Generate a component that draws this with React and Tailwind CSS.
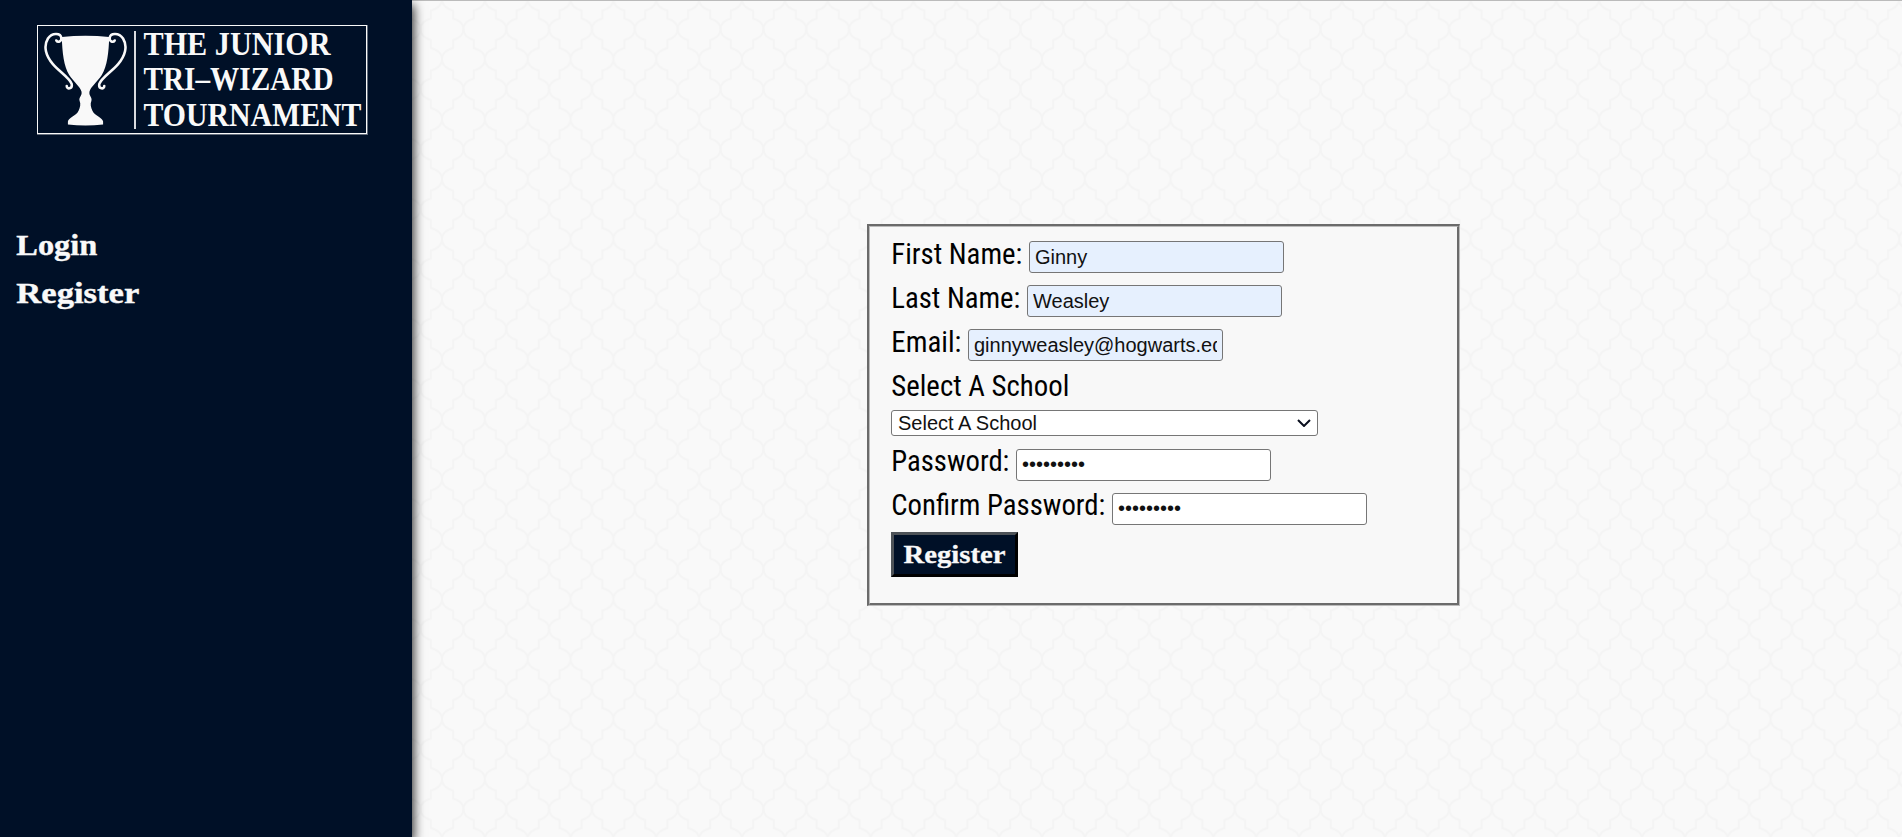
import React from "react";

function QuatrefoilBackground() {
  return (
    <svg className="absolute inset-0 h-full w-full" aria-hidden="true">
      <defs>
        <pattern id="quatrefoil" x="30" y="-1.7" width="42.857" height="60" patternUnits="userSpaceOnUse">
          <g fill="none" stroke="#f4f4f4" strokeWidth="2">
            <path d="M0 0C0 5.500 5 9.500 11.200 11.200V19.300C17 21 21.430 24.500 21.430 30C21.430 35.500 17 39 11.200 40.700V48.800C5 50.500 0 54.500 0 60" />
            <path d="M42.857 0C42.857 5.500 37.857 9.500 31.657 11.200V19.300C25.857 21 21.430 24.500 21.430 30C21.430 35.500 25.857 39 31.657 40.700V48.800C37.857 50.500 42.857 54.500 42.857 60" />
          </g>
        </pattern>
      </defs>
      <rect width="100%" height="100%" fill="url(#quatrefoil)" />
    </svg>
  );
}

function Trophy() {
  return (
    <svg className="mt-[6px] h-[96px] w-[83px] shrink-0" viewBox="0 0 84 96" aria-hidden="true">
      <g fill="#f9f9f9">
        <path d="M18 4.500Q42 2 66 4.500C65.500 20 64 34 58.500 43C54 50 47 55 46 60C45.300 64 49 66 48 69C46.500 72 47.500 76 49 79C51 84 59.500 86 59.800 90V93Q42 95 24.200 93V90C24.500 86 33 84 35 79C36.500 76 37.500 72 36 69C35 66 38.700 64 38 60C37 55 30 50 25.500 43C20 34 18.500 20 18 4.500Z" />
        <g fill="none" stroke="#f9f9f9" strokeWidth="2.600" strokeLinecap="round">
          <path d="M12.500 8C14 10.500 18 9 17.500 5.500C17 0 8 0 4 6C-1 14 2 24 9 32C16 40 26 46 28 52C29 57 23 58 23 54" />
          <path d="M71.500 8C70 10.500 66 9 66.500 5.500C67 0 76 0 80 6C85 14 82 24 75 32C68 40 58 46 56 52C55 57 61 58 61 54" />
        </g>
      </g>
    </svg>
  );
}

function Logo() {
  return (
    <div className="flex h-[109px] w-[330px] items-start border border-[#f9f9f9] pl-[6px] shadow-[0.5px_0.5px_0_0.5px_#f9f9f966]">
      <Trophy />
      <div className="ml-[7px] mt-[5px] h-[98px] w-[1.5px] shrink-0 bg-[#d9dbdf]" />
      <svg className="ml-[4px] h-[107px] w-[226px] shrink-0 overflow-visible">
        <g fill="#f9f9f9" fontFamily="'Liberation Serif', serif" fontWeight="700" fontSize="33">
          <text x="3.500" y="29.300" textLength="187" lengthAdjust="spacingAndGlyphs">THE JUNIOR</text>
          <text x="3.500" y="64.300" textLength="190" lengthAdjust="spacingAndGlyphs">TRI–WIZARD</text>
          <text x="3.500" y="99.500" textLength="218" lengthAdjust="spacingAndGlyphs">TOURNAMENT</text>
        </g>
      </svg>
    </div>
  );
}

function FieldRow({ label, width, value, type = "text", filled = false }) {
  const isPassword = type === "password";
  return (
    <div className="flex h-[44px] items-start">
      <svg className={`${width} h-[36px] shrink-0 overflow-visible`}>
        <text x="0.300" y={isPassword ? 28 : 29} fontFamily="'Roboto Condensed', Roboto, sans-serif" fontSize="29.500" textLength={label.length} lengthAdjust="spacingAndGlyphs">{label.text}</text>
      </svg>
      <input
        type={type}
        defaultValue={value}
        className={`mt-[6px] h-8 w-[255px] rounded-[3px] border border-[#767676] px-[5px] font-['Liberation_Sans',sans-serif] text-[20px] text-[#111] ${filled ? "bg-[#e6f0fe]" : "bg-white"} ${isPassword ? "pb-[2px]" : ""}`}
      />
    </div>
  );
}

function RegisterForm() {
  return (
    <div className="relative h-[382px] w-[593px] border-b border-l-2 border-r border-t-2 border-b-[#bbb] border-l-[#6b6b6b] border-r-[#bbb] border-t-[#6b6b6b]">
      <form className="flex h-full flex-col items-start border-b-2 border-l border-r-2 border-t border-b-[#6b6b6b] border-l-[#bbb] border-r-[#6b6b6b] border-t-[#bbb] bg-[#f8f8f8] pl-[21px] pt-[8px]">
        <FieldRow label={{ text: "First Name:", length: 131 }} width="w-[138px]" value="Ginny" filled />
        <FieldRow label={{ text: "Last Name:", length: 129 }} width="w-[136px]" value="Weasley" filled />
        <FieldRow label={{ text: "Email:", length: 70 }} width="w-[77px]" value="ginnyweasley@hogwarts.edu" filled />
        <svg className="h-[43px] w-[200px] overflow-visible">
          <text x="0.300" y="29" fontFamily="'Roboto Condensed', Roboto, sans-serif" fontSize="29.500" textLength="178" lengthAdjust="spacingAndGlyphs">Select A School</text>
        </svg>
        <div className="grid h-[26px] w-[427px]">
          <select className="col-start-1 row-start-1 h-[26px] appearance-none rounded-[3px] border border-[#767676] bg-white pl-[6px] font-['Liberation_Sans',sans-serif] text-[20px] leading-[24px] text-[#111]">
            <option>Select A School</option>
          </select>
          <svg className="pointer-events-none col-start-1 row-start-1 mr-[7px] h-[8px] w-[14px] self-center justify-self-end" viewBox="0 0 14 8" fill="none" stroke="#0a0f1e" strokeWidth="2">
            <path d="M1 1L7 7L13 1" />
          </svg>
        </div>
        <div className="mt-[7px]">
          <FieldRow label={{ text: "Password:", length: 118 }} width="w-[125px]" value="wizardpwd" type="password" />
          <FieldRow label={{ text: "Confirm Password:", length: 214 }} width="w-[221px]" value="wizardpwd" type="password" />
        </div>
        <button type="button" className="mt-[1px] flex h-[45px] w-[127px] items-center justify-center border-[3px] border-b-black border-l-[#4d5257] border-r-black border-t-[#4d5257] bg-[#001027]">
          <svg className="h-[39px] w-[105px]">
            <text x="1.500" y="28" fill="#f9f9f9" stroke="#f9f9f9" strokeWidth="0.300" fontFamily="'Liberation Serif', serif" fontWeight="700" fontSize="25" textLength="102" lengthAdjust="spacingAndGlyphs">Register</text>
          </svg>
        </button>
      </form>
    </div>
  );
}

export default function App() {
  return (
    <div className="flex h-[837px] w-full overflow-hidden bg-[#f9f9f9] text-black">
      <aside className="relative z-10 flex w-[412px] shrink-0 flex-col bg-[#001027] shadow-[2px_5px_10px_#000000cc]">
        <div className="pl-[37px] pt-[25px]">
          <Logo />
        </div>
        <nav className="mt-[88px] flex flex-col pl-[16px]">
          <svg className="h-[48px] w-[140px]">
            <text x="0.300" y="32.500" fill="#f9f9f9" stroke="#f9f9f9" strokeWidth="0.400" fontFamily="'Liberation Serif', serif" fontWeight="700" fontSize="30" textLength="81" lengthAdjust="spacingAndGlyphs">Login</text>
          </svg>
          <svg className="h-[48px] w-[140px]">
            <text x="0.300" y="32.500" fill="#f9f9f9" stroke="#f9f9f9" strokeWidth="0.400" fontFamily="'Liberation Serif', serif" fontWeight="700" fontSize="30" textLength="123" lengthAdjust="spacingAndGlyphs">Register</text>
          </svg>
        </nav>
      </aside>
      <main className="relative flex flex-1 justify-center border-t border-[#bbb] pt-[223px]">
        <QuatrefoilBackground />
        <div className="mr-[-13px]">
          <RegisterForm />
        </div>
      </main>
    </div>
  );
}
